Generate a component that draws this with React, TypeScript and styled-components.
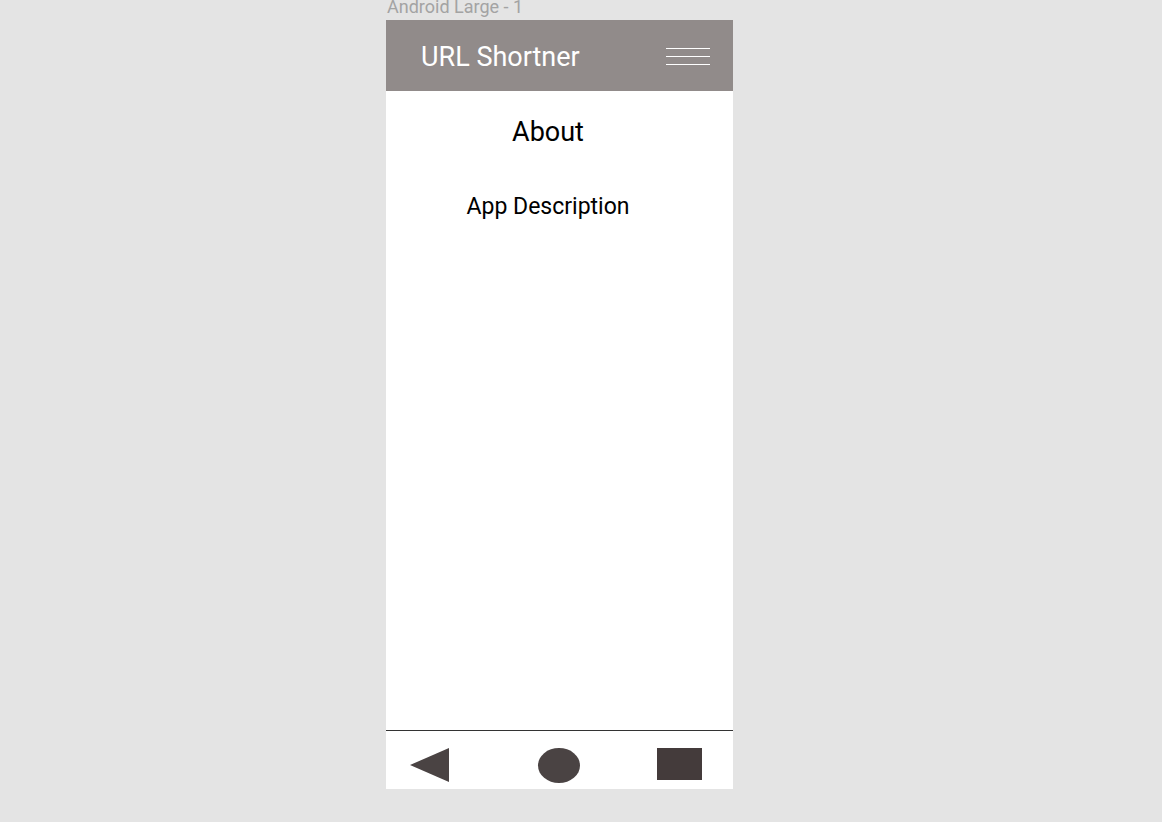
import React from "react";
import styled, { createGlobalStyle } from "styled-components";

const Global = createGlobalStyle`
  html, body { margin: 0; padding: 0; background: #e4e4e4; }
  body { font-family: Roboto, "Liberation Sans", sans-serif; }
`;

const Page = styled.div`
  display: flex;
  flex-direction: column;
  align-items: flex-start;
  padding-left: 386px;
  width: 1162px;
  height: 822px;
  box-sizing: border-box;
  overflow: hidden;
`;

const FrameLabel = styled.div`
  font-size: 18px;
  line-height: 18px;
  height: 24px;
  margin-top: -4px;
  padding-left: 1px;
  padding-bottom: 4px;
  box-sizing: border-box;
  color: #a3a3a3;
  display: flex;
  align-items: flex-end;
`;

const Frame = styled.div`
  width: 347px;
  height: 769px;
  background: #ffffff;
  display: flex;
  flex-direction: column;
`;

const Header = styled.header`
  height: 71px;
  background: #918b8a;
  display: flex;
  align-items: center;
  justify-content: space-between;
  padding: 2px 23px 0 35px;
  box-sizing: border-box;
  flex-shrink: 0;
`;

const Title = styled.h1`
  margin: 0;
  font-weight: 400;
  font-size: 27px;
  color: #ffffff;
`;

const Burger = styled.div`
  width: 44px;
  display: flex;
  flex-direction: column;
  gap: 7px;
  & > span {
    display: block;
    height: 1px;
    background: #ffffff;
  }
`;

const Content = styled.main`
  flex: 1;
  display: flex;
  flex-direction: column;
  align-items: center;
  padding-top: 24px;
  padding-right: 23px;
`;

const Heading = styled.h2`
  margin: 0;
  font-weight: 400;
  font-size: 27px;
  line-height: 34px;
  color: #000;
`;

const Description = styled.p`
  margin: 44px 0 0;
  font-size: 23px;
  line-height: 28px;
  color: #000;
`;

const NavBar = styled.nav`
  height: 59px;
  box-sizing: border-box;
  border-top: 1px solid #333333;
  display: flex;
  align-items: flex-start;
  justify-content: space-between;
  padding: 17px 31px 0 24px;
  flex-shrink: 0;
`;

const Triangle = styled.div`
  width: 0;
  height: 0;
  border-top: 17px solid transparent;
  border-bottom: 17px solid transparent;
  border-right: 39px solid #4a4343;
`;

const Circle = styled.div`
  width: 42px;
  height: 35px;
  border-radius: 50%;
  background: #4a4343;
  margin-left: 11px;
`;

const Square = styled.div`
  width: 45px;
  height: 32px;
  background: #443b3b;
`;

export default function App() {
  return (
    <>
      <Global />
      <Page>
        <FrameLabel>Android Large - 1</FrameLabel>
        <Frame>
          <Header>
            <Title>URL Shortner</Title>
            <Burger>
              <span />
              <span />
              <span />
            </Burger>
          </Header>
          <Content>
            <Heading>About</Heading>
            <Description>App Description</Description>
          </Content>
          <NavBar>
            <Triangle />
            <Circle />
            <Square />
          </NavBar>
        </Frame>
      </Page>
    </>
  );
}
